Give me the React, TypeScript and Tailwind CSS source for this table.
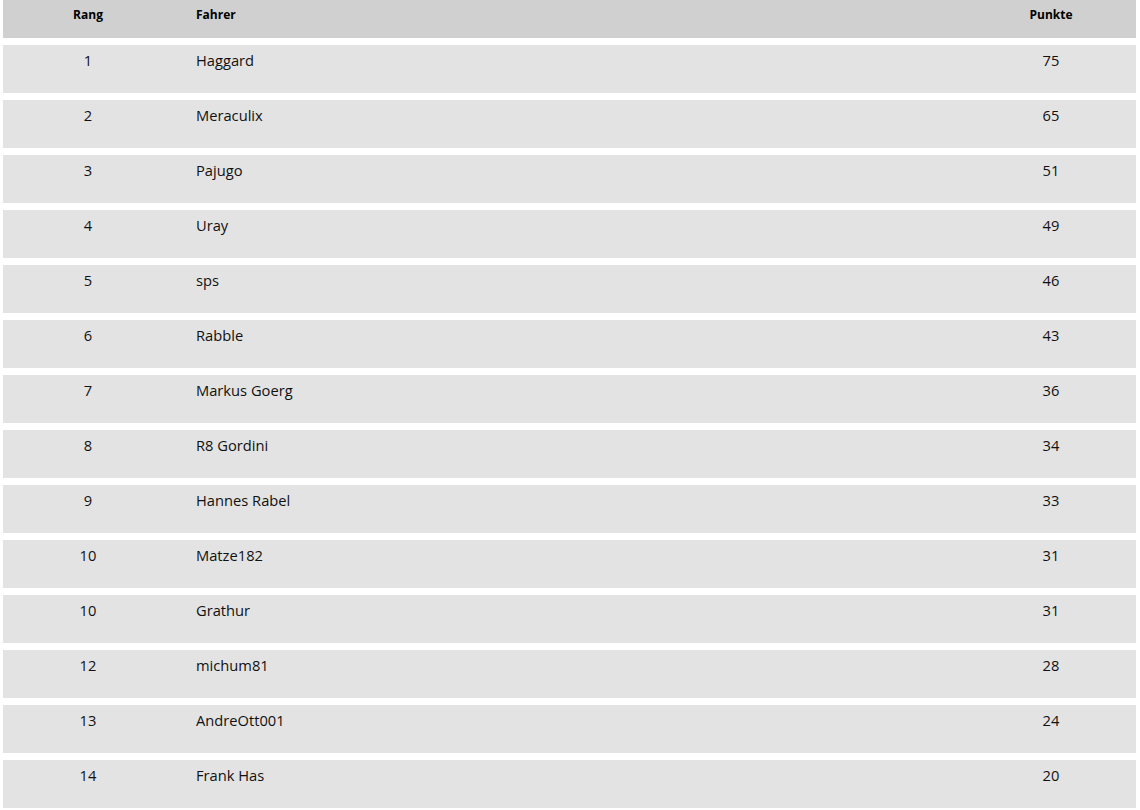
const rows: [string, string, number][] = [
  ["1", "Haggard", 75],
  ["2", "Meraculix", 65],
  ["3", "Pajugo", 51],
  ["4", "Uray", 49],
  ["5", "sps", 46],
  ["6", "Rabble", 43],
  ["7", "Markus Goerg", 36],
  ["8", "R8 Gordini", 34],
  ["9", "Hannes Rabel", 33],
  ["10", "Matze182", 31],
  ["10", "Grathur", 31],
  ["12", "michum81", 28],
  ["13", "AndreOtt001", 24],
  ["14", "Frank Has", 20],
];

export default function App() {
  return (
    <div className="w-[1140px] h-[810px] overflow-hidden bg-white pl-[3px] pr-[4px] font-['Open_Sans',sans-serif] text-[#111]">
      <div className="grid grid-cols-[170px_1fr_170px] h-[38px] bg-[#d0d0d0] text-[12px] font-bold text-black">
        <div className="text-center pt-[6px]">Rang</div>
        <div className="pl-[23px] pt-[6px]">Fahrer</div>
        <div className="text-center pt-[6px]">Punkte</div>
      </div>
      <div className="flex flex-col gap-[7px] mt-[7px]">
        {rows.map(([rank, name, pts], i) => (
          <div key={i} className="grid grid-cols-[170px_1fr_170px] h-[48px] bg-[#e3e3e3] text-[14.7px] leading-[20px]">
            <div className="text-center pt-[5px]">{rank}</div>
            <div className="pl-[23px] pt-[5px]">{name}</div>
            <div className="text-center pt-[5px]">{pts}</div>
          </div>
        ))}
      </div>
    </div>
  );
}
